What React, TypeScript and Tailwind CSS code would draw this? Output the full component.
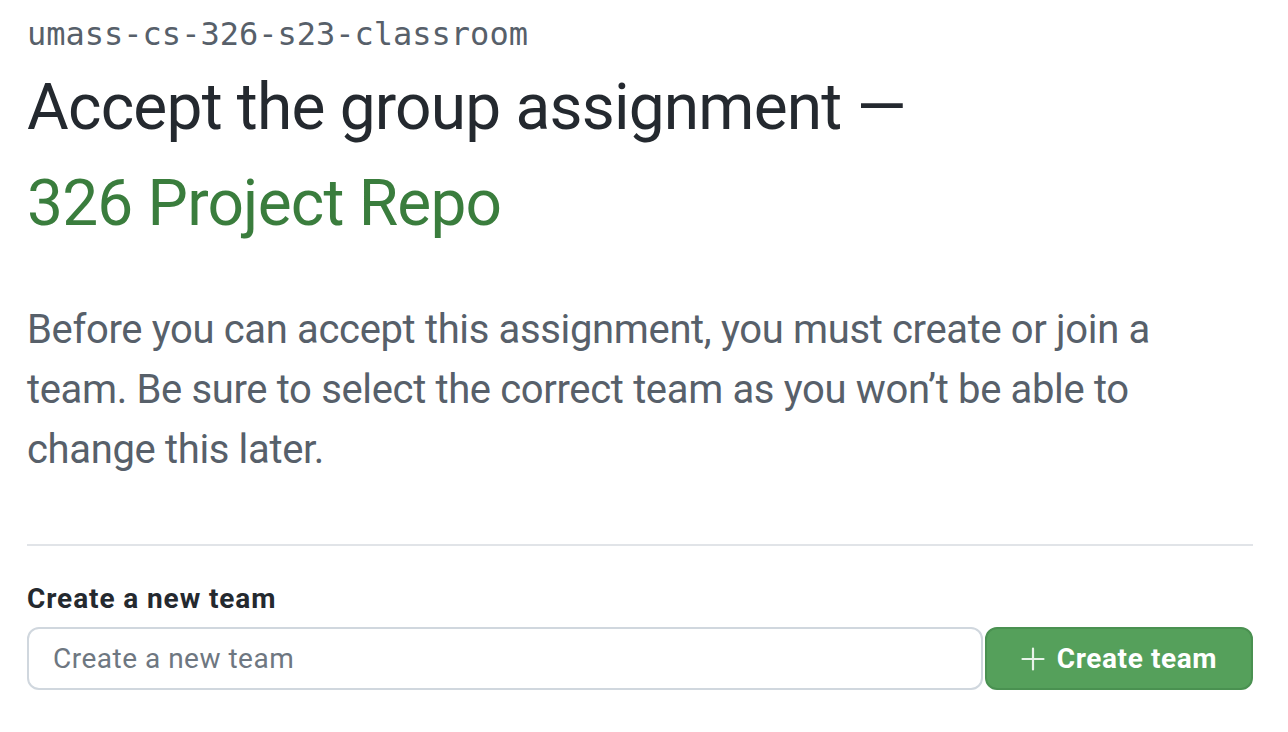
import React from "react";

export default function App() {
  return (
    <div className="min-h-screen bg-white pl-[27px] pr-[35px] pt-[12px]" style={{ fontFamily: "Roboto, Inter, 'Noto Sans', sans-serif" }}>
      <div className="text-[32px] leading-[44px] text-[#57606a]" style={{ fontFamily: "'DejaVu Sans Mono', 'Liberation Mono', monospace" }}>
        umass-cs-326-s23-classroom
      </div>
      <h1 className="mt-[4px] text-[64px] leading-[96px] font-normal text-[#24292f] tracking-[-0.8px]">
        Accept the group assignment —
        <br />
        <span className="text-[#3a7d3d]">326 Project Repo</span>
      </h1>
      <p className="mt-[48px] text-[40px] leading-[60px] text-[#57606a] tracking-[-0.35px]">
        Before you can accept this assignment, you must create or join a
        <br />
        team. Be sure to select the correct team as you won’t be able to
        <br />
        change this later.
      </p>
      <div className="mt-[64px] h-[2px] bg-[#e1e4e8]" />
      <div className="mt-[33px]">
        <label className="block text-[28px] leading-[40px] font-bold tracking-[0.9px] text-[#24292f]">Create a new team</label>
        <div className="mt-[8px] flex items-stretch gap-[2px]">
          <input
            type="text"
            placeholder="Create a new team"
            className="h-[63px] min-w-0 flex-1 rounded-[12px] border-2 border-[#d0d7de] px-[24px] text-[28px] tracking-[0.5px] text-[#24292f] placeholder:text-[#6e7781] outline-none"
          />
          <button className="flex h-[63px] w-[268px] items-center justify-center gap-[12px] rounded-[12px] border-2 border-[#4a9151] bg-[#55a05b] text-[28px] font-bold tracking-[0.6px] text-white">
            <svg width="24" height="24" viewBox="0 0 24 24" fill="none" stroke="#e8f3e9" strokeWidth="2.2" strokeLinecap="round">
              <path d="M12 1.5v21M1.5 12h21" />
            </svg>
            Create team
          </button>
        </div>
      </div>
    </div>
  );
}
